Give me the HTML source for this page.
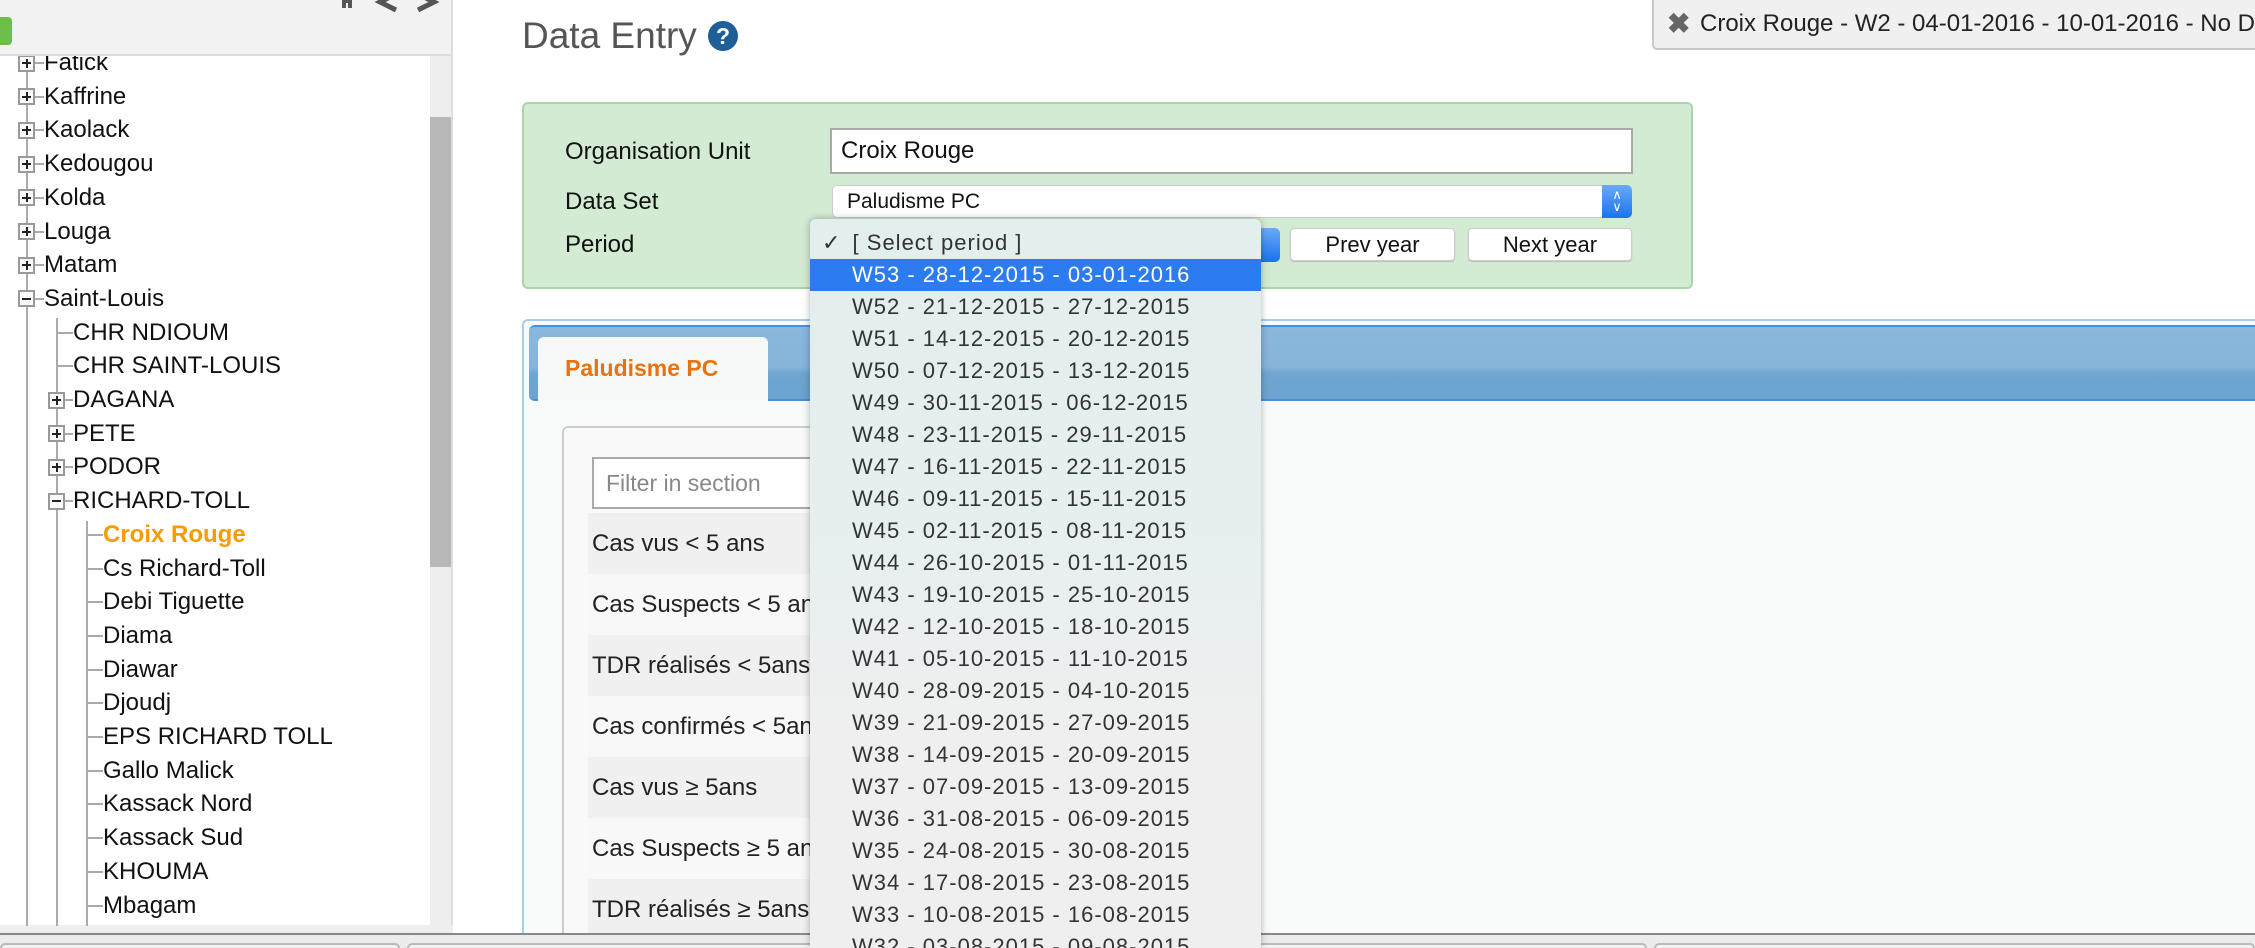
<!DOCTYPE html>
<html style="overflow:hidden;height:948px"><head><meta charset="utf-8">
<style>
*{box-sizing:border-box;margin:0;padding:0}
body{width:2255px;height:948px;overflow:hidden;background:#fff;font-family:"Liberation Sans",sans-serif;position:relative}
.a{position:absolute}
.t{position:absolute;font-size:24px;color:#111;white-space:nowrap;line-height:34px}
.bx{position:absolute;width:17px;height:17px;border:2px solid #999;background:#fafafa}
.bx:before{content:"";position:absolute;left:2px;top:5.5px;width:9px;height:2px;background:#222}
.bx.p:after{content:"";position:absolute;left:5.5px;top:2px;width:2px;height:9px;background:#222}
.hl{position:absolute;height:2px;background:#aaa}
.dd div{position:absolute;left:0;width:451px;height:32px;line-height:32px;padding-left:42px;font-size:22px;letter-spacing:1px;color:#333;white-space:nowrap}
.row{position:absolute;left:588px;width:300px;height:61px;line-height:61px;font-size:24px;color:#222;padding-left:4px;white-space:nowrap}
</style></head><body>
<div class="a" style="left:451px;top:56px;width:2px;height:877px;background:#ddd"></div>
<div class="a" style="left:430px;top:56px;width:21px;height:877px;background:#eee"></div>
<div class="a" style="left:430px;top:117px;width:21px;height:450px;background:#b8b8b8"></div>
<div class="a" style="left:0;top:925px;width:453px;height:8px;background:#eee"></div>

<div class="a" style="left:26px;top:56px;width:2px;height:870px;background:#aaa"></div>
<div class="a" style="left:56px;top:318px;width:2px;height:608px;background:#aaa"></div>
<div class="a" style="left:86px;top:521px;width:2px;height:405px;background:#aaa"></div>

<div id="tree"></div>
<script>
var tree=document.getElementById('tree'),h='';
var items=[["Fatick",0,'p'],["Kaffrine",0,'p'],["Kaolack",0,'p'],["Kedougou",0,'p'],["Kolda",0,'p'],["Louga",0,'p'],["Matam",0,'p'],["Saint-Louis",0,'m'],
["CHR NDIOUM",1,''],["CHR SAINT-LOUIS",1,''],["DAGANA",1,'p'],["PETE",1,'p'],["PODOR",1,'p'],["RICHARD-TOLL",1,'m'],
["Croix Rouge",2,''],["Cs Richard-Toll",2,''],["Debi Tiguette",2,''],["Diama",2,''],["Diawar",2,''],["Djoudj",2,''],["EPS RICHARD TOLL",2,''],["Gallo Malick",2,''],["Kassack Nord",2,''],["Kassack Sud",2,''],["KHOUMA",2,''],["Mbagam",2,'']];
var lx=[27,57,87],tx=[44,73,103];
items.forEach(function(it,i){var c=63+i*33.7,l=it[1];
 h+='<div class="hl" style="left:'+lx[l]+'px;top:'+(c-1)+'px;width:'+(tx[l]-lx[l])+'px"></div>';
 if(it[2]) h+='<div class="bx '+(it[2]=='p'?'p':'')+'" style="left:'+(lx[l]-9)+'px;top:'+(c-8.5)+'px"></div>';
 var st=i==14?'color:#f59d00;font-weight:bold;':'';
 h+='<div class="t" style="left:'+tx[l]+'px;top:'+(c-17)+'px;'+st+'">'+it[0]+'</div>';});
tree.innerHTML=h;
</script>
<div class="a" style="left:0;top:0;width:453px;height:56px;background:#f2f2f2;border-bottom:2px solid #ddd;border-right:2px solid #ddd"></div>
<div class="a" style="left:0;top:17px;width:12px;height:28px;background:#6cc04a;border-radius:0 4px 4px 0"></div>
<svg class="a" style="left:336px;top:0" width="110" height="14" viewBox="0 0 110 14">
 <path d="M6 0v8h4V3h2v5h4V0z" fill="#555"/>
 <path d="M60 -6L44 2l16 8" stroke="#555" stroke-width="5" fill="none"/>
 <path d="M82 -6l16 8-16 8" stroke="#555" stroke-width="5" fill="none"/>
</svg>

<div class="a" style="left:522px;top:13px;font-size:37px;color:#555;line-height:46px">Data Entry</div>
<div class="a" style="left:708px;top:21px;width:30px;height:30px;border-radius:50%;background:#1d5f96;color:#fff;font-weight:bold;font-size:23px;text-align:center;line-height:30px">?</div>

<div class="a" style="left:1652px;top:-2px;width:603px;height:52px;background:#f0f0f0;border:2px solid #c8c8c8;border-right:none;border-radius:0 0 0 5px;overflow:hidden;white-space:nowrap">
 <span class="a" style="left:13px;top:4px;font-size:28px;color:#666;font-weight:bold;line-height:40px">&#x2716;</span>
 <span class="a" style="left:46px;top:7px;font-size:24px;color:#222;line-height:34px">Croix Rouge - W2 - 04-01-2016 - 10-01-2016 - No Data</span>
</div>

<div class="a" style="left:522px;top:102px;width:1171px;height:187px;background:#d3ebd3;border:2px solid #a9d5a9;border-radius:6px"></div>
<div class="a" style="left:565px;top:137px;font-size:24px;color:#111;line-height:30px">Organisation Unit</div>
<div class="a" style="left:565px;top:187px;font-size:24px;color:#111;line-height:30px">Data Set</div>
<div class="a" style="left:565px;top:230px;font-size:24px;color:#111;line-height:30px">Period</div>
<div class="a" style="left:830px;top:128px;width:803px;height:46px;background:#fff;border:2px solid #aaa;font-size:24px;line-height:42px;padding-left:9px;color:#111">Croix Rouge</div>
<div class="a" style="left:832px;top:185px;width:800px;height:33px;background:#fff;border:1px solid #ccc;border-radius:5px;font-size:21px;line-height:31px;padding-left:14px;color:#111">Paludisme PC</div>
<div class="a" style="left:1602px;top:185px;width:30px;height:33px;background:linear-gradient(#6aaaf8,#1a73ee);border-radius:0 5px 5px 0;color:#fff;font-size:13px;text-align:center;line-height:12px;padding-top:4px">&#x2227;<br>&#x2228;</div>
<div class="a" style="left:1250px;top:228px;width:30px;height:34px;background:linear-gradient(#6aaaf8,#1a73ee);border-radius:0 5px 5px 0"></div>
<div class="a" style="left:1290px;top:228px;width:165px;height:33px;background:#fff;border:1px solid #ccc;border-radius:4px;font-size:22px;line-height:31px;text-align:center;color:#111;box-shadow:0 1px 1px #bbb">Prev year</div>
<div class="a" style="left:1468px;top:228px;width:164px;height:33px;background:#fff;border:1px solid #ccc;border-radius:4px;font-size:22px;line-height:31px;text-align:center;color:#111;box-shadow:0 1px 1px #bbb">Next year</div>

<div class="a" style="left:522px;top:319px;width:1733px;height:629px;background:#f9fbfb;border:2px solid #a9cde8;border-right:none;border-bottom:none;border-radius:6px 0 0 0"></div>
<div class="a" style="left:529px;top:325px;width:1726px;height:76px;background:linear-gradient(#8ab7dc 0%,#87b4d9 55%,#6fa5d1 65%,#6ca3d0 100%);border-top:2px solid #4a90d4;border-bottom:2px solid #4a90d4;border-radius:6px 0 0 6px"></div>
<div class="a" style="left:538px;top:337px;width:230px;height:64px;background:#f7f9f9;border-radius:6px 6px 0 0;color:#e8720c;font-weight:bold;font-size:23px;line-height:62px;padding-left:27px">Paludisme PC</div>
<div class="a" style="left:562px;top:426px;width:400px;height:522px;border:2px solid #ccc;border-bottom:none;border-radius:6px 6px 0 0;background:#f9f9f9"></div>
<div class="a" style="left:592px;top:457px;width:300px;height:52px;background:#fff;border:2px solid #aaa;font-size:23px;line-height:48px;padding-left:12px;color:#888">Filter in section</div>
<div class="row" style="top:513px;background:#f0f0f0">Cas vus &lt; 5 ans</div>
<div class="row" style="top:574px;background:#f8f8f8">Cas Suspects &lt; 5 ans</div>
<div class="row" style="top:635px;background:#f0f0f0">TDR réalisés &lt; 5ans</div>
<div class="row" style="top:696px;background:#f8f8f8">Cas confirmés &lt; 5ans</div>
<div class="row" style="top:757px;background:#f0f0f0">Cas vus ≥ 5ans</div>
<div class="row" style="top:818px;background:#f8f8f8">Cas Suspects ≥ 5 ans</div>
<div class="row" style="top:879px;background:#f0f0f0;height:54px">TDR réalisés ≥ 5ans</div>

<div class="a" style="left:0;top:933px;width:2255px;height:15px;background:#ececec;border-top:2px solid #888"></div>
<div class="a" style="left:0;top:943px;width:400px;height:5px;border:2px solid #bbb;border-bottom:none;border-radius:5px 5px 0 0;background:#f2f2f2"></div>
<div class="a" style="left:407px;top:943px;width:1240px;height:5px;border:2px solid #bbb;border-bottom:none;border-radius:5px 5px 0 0;background:#f2f2f2"></div>
<div class="a" style="left:1654px;top:943px;width:601px;height:5px;border:2px solid #bbb;border-bottom:none;border-radius:5px 5px 0 0;background:#f2f2f2"></div>

<div class="a dd" style="z-index:5;left:810px;top:219px;width:451px;height:729px;background:linear-gradient(#e3eeee 0px,#e6efef 300px,#efefef 520px,#efefef 100%);border-radius:6px 6px 0 0;box-shadow:0 0 8px rgba(0,0,0,.3);overflow:hidden" id="dd"></div>
<script>
var d=document.getElementById('dd'),s='<div style="top:8px;padding-left:12px">&#x2713; <span style="margin-left:4px">[ Select period ]</span></div>';
var w=[["53","28-12-2015","03-01-2016"],["52","21-12-2015","27-12-2015"],["51","14-12-2015","20-12-2015"],["50","07-12-2015","13-12-2015"],["49","30-11-2015","06-12-2015"],["48","23-11-2015","29-11-2015"],["47","16-11-2015","22-11-2015"],["46","09-11-2015","15-11-2015"],["45","02-11-2015","08-11-2015"],["44","26-10-2015","01-11-2015"],["43","19-10-2015","25-10-2015"],["42","12-10-2015","18-10-2015"],["41","05-10-2015","11-10-2015"],["40","28-09-2015","04-10-2015"],["39","21-09-2015","27-09-2015"],["38","14-09-2015","20-09-2015"],["37","07-09-2015","13-09-2015"],["36","31-08-2015","06-09-2015"],["35","24-08-2015","30-08-2015"],["34","17-08-2015","23-08-2015"],["33","10-08-2015","16-08-2015"],["32","03-08-2015","09-08-2015"]];
w.forEach(function(x,i){var st=i==0?'background:#2b7cf0;color:#fff;':'';
s+='<div style="top:'+(40+i*32)+'px;'+st+'">W'+x[0]+' - '+x[1]+' - '+x[2]+'</div>';});
d.innerHTML=s;
</script>
</body></html>
